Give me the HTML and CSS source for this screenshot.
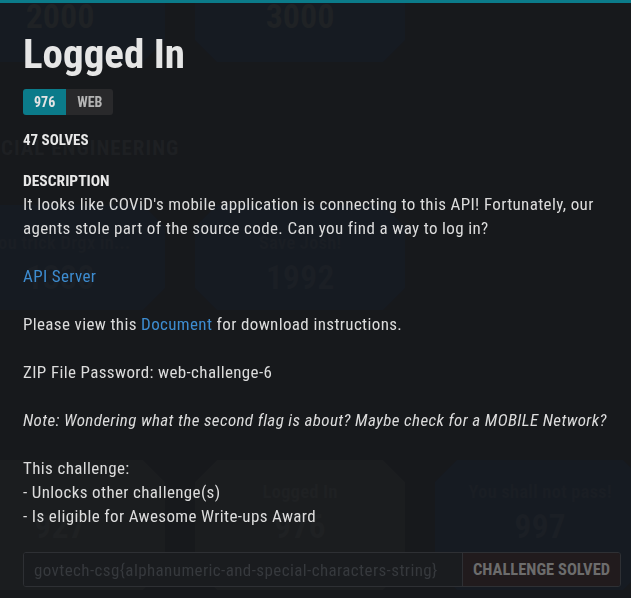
FILE: index.html
```html
<!DOCTYPE html>
<html lang="en">
<head>
<meta charset="utf-8">
<title>Logged In</title>
<link rel="stylesheet" href="styles.css">
</head>
<body>
<div class="page">
  <div class="grid row-a">
    <div class="card blue"><div class="num">2000</div></div>
    <div class="card blue"><div class="num">3000</div></div>
    <div class="card plain"></div>
  </div>
  <div class="cat">SOCIAL ENGINEERING</div>
  <div class="grid row-b">
    <div class="card blue"><div class="ctitle">you trick Drgx in...</div><div class="num">1338</div></div>
    <div class="card blue"><div class="ctitle">Save Josh!</div><div class="num">1992</div></div>
    <div class="card plain"></div>
  </div>
  <div class="cat small">WEB</div>
  <div class="grid row-c">
    <div class="card grey"><div class="ctitle">&nbsp;</div><div class="num">927</div></div>
    <div class="card grey"><div class="ctitle">Logged In</div><div class="num">976</div></div>
    <div class="card blue"><div class="ctitle">You shall not pass!</div><div class="num">997</div></div>
  </div>
</div>

<div class="modal">
  <div class="modal-bar"></div>
  <div class="modal-body">
    <h1 class="title">Logged In</h1>
    <div class="tags"><span class="tag tag-pts">976</span><span class="tag tag-cat">WEB</span></div>
    <div class="solves">47 SOLVES</div>
    <div class="desc-label">DESCRIPTION</div>
    <div class="desc">
      <p>It looks like COViD's mobile application is connecting to this API! Fortunately, our agents stole part of the source code. Can you find a way to log in?</p>
      <p><a href="#">API Server</a></p>
      <p>Please view this <a href="#">Document</a> for download instructions.</p>
      <p>ZIP File Password: web-challenge-6</p>
      <p><em>Note: Wondering what the second flag is about? Maybe check for a MOBILE Network?</em></p>
      <p>This challenge:<br>- Unlocks other challenge(s)<br>- Is eligible for Awesome Write-ups Award</p>
    </div>
    <div class="submit">
      <input class="flag" type="text" placeholder="govtech-csg{alphanumeric-and-special-characters-string}">
      <button class="solved" type="button">CHALLENGE SOLVED</button>
    </div>
  </div>
</div>
</body>
</html>
```

FILE: styles.css
```css
html, body {
  margin: 0;
  padding: 0;
  background: #17191c;
  width: 631px;
  height: 598px;
  overflow: hidden;
}

.page {
  font-family: "Roboto Condensed", "DejaVu Sans Condensed", sans-serif;
  margin-left: -45px;
  width: 700px;
}

.grid {
  display: grid;
  grid-template-columns: 210px 210px 210px;
  column-gap: 30px;
}

.row-a { margin-top: -40px; height: 102px; }
.row-b { margin-top: 45px; height: 105px; }
.row-c { margin-top: 46px; height: 130px; }

.card {
  clip-path: polygon(22px 0, calc(100% - 22px) 0, 100% 22px, 100% calc(100% - 22px), calc(100% - 22px) 100%, 22px 100%, 0 calc(100% - 22px), 0 22px);
  display: flex;
  flex-direction: column;
  align-items: center;
  box-sizing: border-box;
}

.row-a .card { justify-content: flex-end; padding-bottom: 28px; }
.row-b .card { padding-top: 26px; }
.row-c .card { padding-top: 20px; }

.card.blue { background: #161b22; }
.card.grey { background: #1b1d1f; }
.card.plain { background: transparent; }

.num {
  font-size: 34px;
  font-weight: 700;
  color: #1b1f25;
  line-height: 36px;
  margin-top: 4px;
}
.row-a .num { margin-top: 0; color: #1f2225; }
.grey .num { color: #1f2123; }

.ctitle {
  font-size: 19px;
  font-weight: 700;
  color: #1a1e24;
  line-height: 24px;
}
.grey .ctitle { color: #1f2123; }

.cat {
  margin-top: 74px;
  margin-left: 20px;
  font-size: 21px;
  font-weight: 700;
  letter-spacing: 1px;
  color: #1e2023;
  height: 24px;
  line-height: 24px;
}
.cat.small { margin-top: 80px; margin-left: 5px; color: #1e2023; }

/* modal */
.modal {
  position: fixed;
  inset: 0;
}

.modal-bar {
  height: 3px;
  background: #0b7b8a;
}

.modal-body {
  padding: 0 10px 0 23px;
  font-family: "Roboto Condensed", Roboto, "Liberation Sans Narrow", sans-serif;
  color: #dcdcdc;
}

.title {
  margin: 28px 0 0 0;
  font-family: "Roboto Condensed", "DejaVu Sans Condensed", sans-serif;
  font-weight: 700;
  font-size: 41px;
  line-height: 46px;
  color: #e6e6e6;
}

.tags {
  display: flex;
  margin-top: 12px;
  height: 26px;
}

.tag {
  display: flex;
  align-items: center;
  padding: 0 11px;
  font-family: "Roboto Condensed", "DejaVu Sans Condensed", sans-serif;
  font-weight: 700;
  font-size: 14px;
}
.tag-pts { background: #0b7b8a; color: #e4e4e4; border-radius: 3px 0 0 3px; }
.tag-cat { background: #29292b; color: #b4b4b4; border-radius: 0 3px 3px 0; }

.solves {
  margin-top: 15px;
  font-family: "Roboto Condensed", "DejaVu Sans Condensed", sans-serif;
  font-weight: 700;
  font-size: 15px;
  line-height: 20px;
  color: #e8e8e8;
}

.desc-label {
  margin-top: 21px;
  font-family: "Roboto Condensed", "DejaVu Sans Condensed", sans-serif;
  font-weight: 700;
  font-size: 15.5px;
  line-height: 20px;
  color: #e8e8e8;
}

.desc {
  font-size: 17px;
  letter-spacing: 0.36px;
  line-height: 24px;
  margin-top: 1px;
}
.desc p { margin: 0 0 24px 0; }
.desc a { color: #3d8cd0; text-decoration: none; }

.submit {
  display: flex;
  margin-top: 15px;
  height: 35px;
  border: 1px solid #2e3034;
  border-radius: 3px;
  box-sizing: border-box;
  overflow: hidden;
}

.flag {
  flex: 1;
  min-width: 0;
  background: #1a1c1f;
  border: none;
  border-right: 1px solid #2e3034;
  padding: 0 10px;
  font-family: "Roboto Condensed", Roboto, sans-serif;
  font-size: 17px;
  letter-spacing: 0.4px;
  color: #3a3d41;
  outline: none;
}
.flag::placeholder { color: #36393d; }

.solved {
  width: 157px;
  background: #211b1d;
  border: none;
  font-family: "Roboto Condensed", "DejaVu Sans Condensed", sans-serif;
  font-weight: 700;
  font-size: 16.5px;
  color: #6c6c6c;
}
```
